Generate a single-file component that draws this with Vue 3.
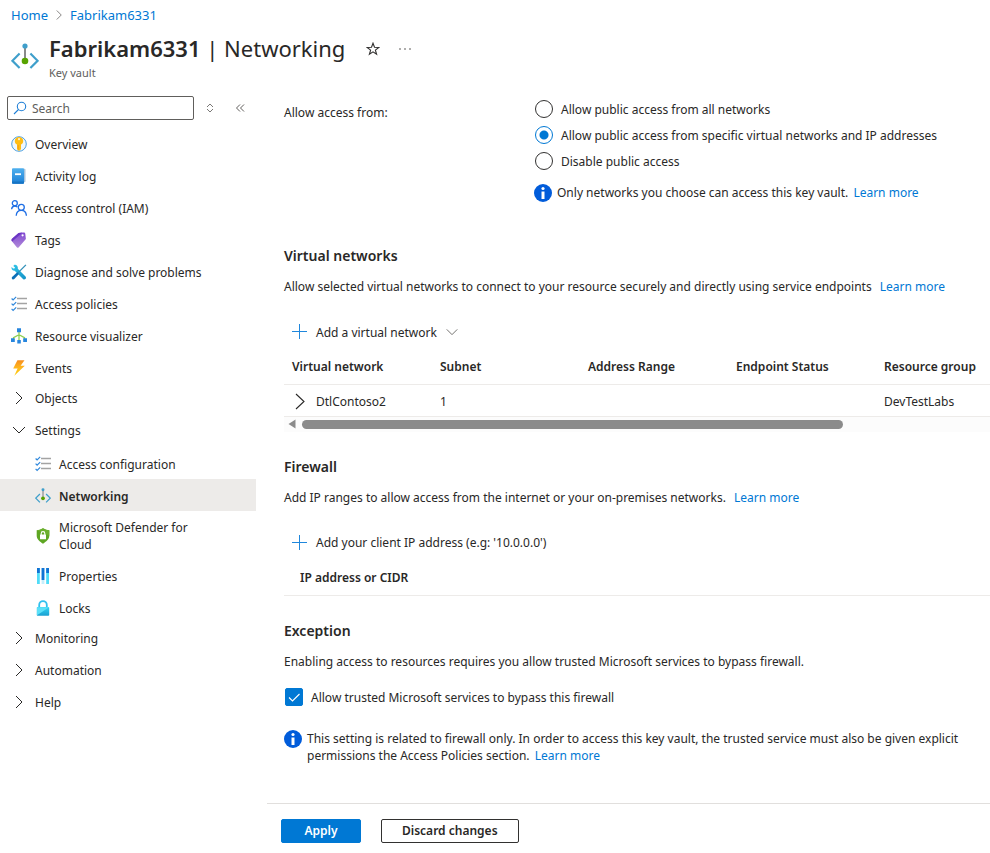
<script setup>
import { ref } from 'vue'

const search = ref('')
const access = ref('specific')
const bypass = ref(true)

const topItems = [
  { label: 'Overview', icon: 'key' },
  { label: 'Activity log', icon: 'log' },
  { label: 'Access control (IAM)', icon: 'people' },
  { label: 'Tags', icon: 'tag' },
  { label: 'Diagnose and solve problems', icon: 'tools' },
  { label: 'Access policies', icon: 'checklist' },
  { label: 'Resource visualizer', icon: 'tree' },
  { label: 'Events', icon: 'bolt' },
]

const groups = [
  { label: 'Objects', items: [] },
  {
    label: 'Settings',
    open: true,
    items: [
      { label: 'Access configuration', icon: 'checklist' },
      { label: 'Networking', icon: 'network', active: true },
      { label: 'Microsoft Defender for Cloud', icon: 'shield' },
      { label: 'Properties', icon: 'bars' },
      { label: 'Locks', icon: 'lock' },
    ],
  },
  { label: 'Monitoring', items: [] },
  { label: 'Automation', items: [] },
  { label: 'Help', items: [] },
]

const accessOptions = [
  { value: 'all', label: 'Allow public access from all networks' },
  { value: 'specific', label: 'Allow public access from specific virtual networks and IP addresses' },
  { value: 'none', label: 'Disable public access' },
]

const columns = ['Virtual network', 'Subnet', 'Address Range', 'Endpoint Status', 'Resource group']
const rows = [{ name: 'DtlContoso2', subnet: '1', range: '', status: '', group: 'DevTestLabs' }]
</script>

<template>
  <div class="page">
    <svg class="sprite" width="0" height="0" aria-hidden="true">
      <defs>
        <linearGradient id="g-blue" x1="0" y1="0" x2="0" y2="1">
          <stop offset="0" stop-color="#4fb0ee" /><stop offset="1" stop-color="#1b7fd6" />
        </linearGradient>
        <linearGradient id="g-purple" x1="0" y1="0" x2="0" y2="1">
          <stop offset="0" stop-color="#8148d2" /><stop offset="1" stop-color="#b08ad8" />
        </linearGradient>
        <linearGradient id="g-bolt" x1="0" y1="0" x2="0" y2="1">
          <stop offset="0" stop-color="#f78d1e" /><stop offset="0.5" stop-color="#ffb81c" /><stop offset="1" stop-color="#fdd00f" />
        </linearGradient>
        <linearGradient id="g-lock" x1="0" y1="0" x2="0" y2="1">
          <stop offset="0" stop-color="#32d4f5" /><stop offset="1" stop-color="#1a9fd0" />
        </linearGradient>
        <linearGradient id="g-tool" x1="0" y1="0" x2="1" y2="1">
          <stop offset="0" stop-color="#32c8ea" /><stop offset="1" stop-color="#1490c6" />
        </linearGradient>
      </defs>
      <symbol id="key" viewBox="0 0 16 16">
        <circle cx="8" cy="8" r="7.3" fill="#eef7fd" stroke="#4c9fdf" stroke-width="1" />
        <path d="M8 1.100c2.400 0 4.200 1.700 4.200 3.900 0 1.700-.8 2.900-2.200 3.600v4.600L8 15l-2-1.800V8.600C4.600 7.900 3.800 6.700 3.800 5c0-2.200 1.800-3.900 4.200-3.900z" fill="#ffbd14" />
        <circle cx="8" cy="3.200" r="1.100" fill="#fff3d0" />
        <path d="M7.300 9v4.800" stroke="#f39a12" stroke-width=".8" />
      </symbol>
      <symbol id="log" viewBox="0 0 16 16">
        <path d="M12 .7h1.500a1 1 0 0 1 1 1v11.600a1 1 0 0 1-1 1H12z" fill="#a8c4dc" />
        <rect x="1" y=".3" width="12" height="15.400" rx="1" fill="url(#g-blue)" />
        <path d="M1 13.500h12v1.200a1 1 0 0 1-1 1H2a1 1 0 0 1-1-1z" fill="#1674c4" />
        <rect x="4" y="5.300" width="6" height="1.800" fill="#fff" />
      </symbol>
      <symbol id="people" viewBox="0 0 16 16">
        <g fill="none" stroke="#1f6fe5" stroke-width="1.300">
          <circle cx="3.800" cy="3.200" r="2.500" /><circle cx="10.300" cy="7.300" r="3" />
          <path d="M.6 9.300C.8 7.300 2 6 3.800 6c1.200 0 2 .5 2.600 1.200M5.200 15.700c.2-3.300 2.200-5.300 5.100-5.300s4.900 2 5.100 5.300" />
        </g>
      </symbol>
      <symbol id="tag" viewBox="0 0 16 16">
        <path d="M1 6.800 7.600.9l5-.4c1 0 1.600.5 1.700 1.400l.6 5L7.600 15.400c-.5.5-1.100.5-1.600 0L.9 9.200c-.6-.8-.6-1.700.1-2.400z" fill="url(#g-purple)" />
        <path d="M1 6.800 7.600.9l3.900-.3L1.100 9.500c-.8-.9-.8-1.900-.1-2.700z" fill="#6b36c4" />
        <circle cx="11.600" cy="3.300" r="1.100" fill="#fff" />
      </symbol>
      <symbol id="tools" viewBox="0 0 16 16">
        <path d="M3.400.8 2.300 1.900 4 3.600l-.6 1-1.300-.2L.6 3C.1 5 1.300 6.700 3.700 6.700l8.300 8.200c1.600 1.500 4-.7 2.500-2.400L6.800 4.700C7.200 2.300 5.700.4 3.400.8z" fill="url(#g-tool)" />
        <path d="m14.900.9-8 8" stroke="#2f8fb8" stroke-width="1.300" />
        <path d="m6.200 8.200 1.800 1.800-4.700 5c-1.500 1.300-3.300-.6-2.200-2z" fill="#0c6fb8" />
      </symbol>
      <symbol id="checklist" viewBox="0 0 16 16">
        <path d="M6 2.500h10M6 7.500h10M6 12.500h10" stroke="#a3a3a3" stroke-width="1.600" />
        <path d="m.6 2.500 1.500 1.500L5.200.9M.6 7.700l1.500 1.500 3.100-3.100M.6 12.900l1.500 1.500 3.100-3.100" fill="none" stroke="#2f88dc" stroke-width="1.200" />
      </symbol>
      <symbol id="tree" viewBox="0 0 16 16">
        <path d="M8 4v8M2.500 12V9.700L8 6.800l5.500 2.900V12" fill="none" stroke="#8fcf52" stroke-width="1.300" />
        <path d="M6 .3h4v4H6zM6.300 12h3.500v3.600H6.300zM0 10.300h3.800v3.800H0zM12.200 10.300H16v3.800h-3.800z" fill="#2786de" />
      </symbol>
      <symbol id="bolt" viewBox="0 0 16 16">
        <path d="M6.400.3h7.100L9.600 5.700h4.200L3.300 15.700l3.300-7.200H2.200z" fill="url(#g-bolt)" />
      </symbol>
      <symbol id="network" viewBox="0 0 28 28">
        <path d="M8.600 10.500 1.400 17.800l7.200 7.300M19.400 10.500l7.200 7.300-7.200 7.300" fill="none" stroke="#3f9fcb" stroke-width="2.200" />
        <path d="M14 4v14" stroke="#8a8a8a" stroke-width="2" />
        <circle cx="14" cy="3" r="2.600" fill="#3f9fcb" /><circle cx="14" cy="18" r="3.300" fill="#57a300" />
      </symbol>
      <symbol id="shield" viewBox="0 0 16 16">
        <path d="M8 .3c2 1.300 4 1.800 6.300 1.900v5.600c0 3.600-3.200 6-6.300 7.900-3.100-1.900-6.300-4.300-6.300-7.900V2.200C4 2.100 6 1.600 8 .3z" fill="#5ea623" />
        <path d="M8 .3c2 1.300 4 1.800 6.300 1.900v5.600L1.700 2.200C4 2.100 6 1.600 8 .3z" fill="#6cb02e" />
        <rect x="5" y="6.600" width="6" height="4.600" rx=".5" fill="#fff" />
        <path d="M6.200 7V5.400a1.800 1.800 0 0 1 3.600 0V7" fill="none" stroke="#fff" stroke-width="1.100" />
      </symbol>
      <symbol id="bars" viewBox="0 0 16 16">
        <path d="M2 0h2.800v16H2zM11.200 0H14v16h-2.800z" fill="#50dcf8" />
        <path d="M6.600 0h2.800v16H6.600z" fill="#c6eefb" />
        <path d="M2 0h2.800v5H2zM6.600 0h2.800v12H6.600zM11.200 0H14v5h-2.800z" fill="#1173d4" />
      </symbol>
      <symbol id="lock" viewBox="0 0 16 16">
        <path d="M4.200 8V4.900a3.800 3.800 0 0 1 7.600 0V8" fill="none" stroke="#32c0ee" stroke-width="1.800" />
        <rect x="1.800" y="7" width="12.400" height="8.800" rx=".8" fill="url(#g-lock)" />
        <path d="M2 7.200v8L14 7.200z" fill="#5be0f8" />
      </symbol>
      <symbol id="right" viewBox="0 0 16 16">
        <path d="m5 2 6 6-6 6" fill="none" stroke="currentColor" stroke-width="1" />
      </symbol>
      <symbol id="right-large" viewBox="0 0 16 20">
        <path d="m4 3 8 7.500L4 18" fill="none" stroke="currentColor" stroke-width="1.100" />
      </symbol>
      <symbol id="down" viewBox="0 0 16 16">
        <path d="m2 5 6 6 6-6" fill="none" stroke="currentColor" stroke-width="1" />
      </symbol>
      <symbol id="plus" viewBox="0 0 16 16">
        <path d="M7.500 0v15M0 7.500h15" stroke="#1f87dc" stroke-width="1" />
      </symbol>
      <symbol id="info" viewBox="0 0 18 18">
        <circle cx="9" cy="9" r="9" fill="#015cda" />
        <circle cx="9" cy="4.500" r="1.600" fill="#fff" /><path d="M7.500 7.500h3v7.500h-3z" fill="#fff" />
      </symbol>
    </svg>

    <header class="head">
      <nav class="crumbs" aria-label="Breadcrumb">
        <a href="#">Home</a>
        <svg class="crumb-sep"><use href="#right" /></svg>
        <a href="#">Fabrikam6331</a>
      </nav>
      <div class="title-row">
        <svg class="title-icon"><use href="#network" /></svg>
        <div>
          <div class="title-line">
            <h1><b>Fabrikam6331</b> | Networking</h1>
            <button class="bare star" aria-label="Favorite">
              <svg viewBox="0 0 14 14" width="14" height="14"><path d="m7 1.200 1.500 4.100 4.300.1-3.400 2.700 1.200 4.200L7 9.900l-3.600 2.400 1.200-4.200L1.200 5.400l4.300-.1z" fill="none" stroke="#323130" stroke-width="1.100" /></svg>
            </button>
            <button class="bare more" aria-label="More">
              <svg viewBox="0 0 12 4" width="12" height="4"><path d="M0 1.500h2v1H0zM5 1.500h2v1H5zM10 1.500h2v1h-2z" fill="#605e5c" /></svg>
            </button>
          </div>
          <p class="subtitle">Key vault</p>
        </div>
      </div>
    </header>

    <div class="body">
      <aside class="side">
        <div class="search-row">
          <label class="search">
            <svg viewBox="0 0 14 14" width="14" height="14"><circle cx="8.500" cy="5.500" r="4.200" fill="none" stroke="#1f7fd6" stroke-width="1.100" /><path d="M5.500 8.500 1 13" stroke="#1f7fd6" stroke-width="1.100" /></svg>
            <input v-model="search" type="text" placeholder="Search" aria-label="Search" />
          </label>
          <button class="bare" aria-label="Expand all">
            <svg viewBox="0 0 10 10" width="10" height="10"><path d="M2 4 5 1l3 3M2 6l3 3 3-3" fill="none" stroke="#7a7876" /></svg>
          </button>
          <button class="bare" aria-label="Collapse menu">
            <svg viewBox="0 0 10 10" width="10" height="10"><path d="M5 1.500 1.500 5 5 8.500M9 1.500 5.500 5 9 8.500" fill="none" stroke="#605e5c" /></svg>
          </button>
        </div>
        <nav class="menu" aria-label="Resource menu">
          <a v-for="item in topItems" :key="item.label" href="#" class="item">
            <svg class="icon"><use :href="'#' + item.icon" /></svg>{{ item.label }}
          </a>
          <template v-for="group in groups" :key="group.label">
            <button class="group" :aria-expanded="!!group.open">
              <svg class="icon"><use :href="group.open ? '#down' : '#right'" /></svg>{{ group.label }}
            </button>
            <a v-for="item in group.items" :key="item.label" href="#" class="item sub" :class="{ active: item.active }">
              <svg class="icon"><use :href="'#' + item.icon" /></svg><span>{{ item.label }}</span>
            </a>
          </template>
        </nav>
      </aside>

      <main class="main">
        <div class="content">
          <section class="access">
            <div id="access-label" class="access-label">Allow access from:</div>
            <div class="access-options">
              <div role="radiogroup" aria-labelledby="access-label">
                <label v-for="option in accessOptions" :key="option.value" class="choice">
                  <input v-model="access" type="radio" name="access" :value="option.value" />{{ option.label }}
                </label>
              </div>
              <div class="note">
                <svg class="info"><use href="#info" /></svg>
                <p>Only networks you choose can access this key vault. <a href="#">Learn more</a></p>
              </div>
            </div>
          </section>

          <section>
            <h2>Virtual networks</h2>
            <p class="lead">Allow selected virtual networks to connect to your resource securely and directly using service endpoints <a href="#">Learn more</a></p>
            <button class="add">
              <svg class="icon"><use href="#plus" /></svg>Add a virtual network<svg class="caret"><use href="#down" /></svg>
            </button>
            <div class="table-wrap">
              <table class="networks">
                <thead>
                  <tr><th v-for="c in columns" :key="c" scope="col">{{ c }}</th></tr>
                </thead>
                <tbody>
                  <tr v-for="row in rows" :key="row.name">
                    <td>
                      <button class="expand"><svg class="chev"><use href="#right-large" /></svg>{{ row.name }}</button>
                    </td>
                    <td>{{ row.subnet }}</td>
                    <td>{{ row.range }}</td>
                    <td>{{ row.status }}</td>
                    <td>{{ row.group }}</td>
                  </tr>
                </tbody>
              </table>
            </div>
            <div class="scrollbar">
              <svg viewBox="0 0 8 10" width="8" height="10"><path d="M7.500.5v9L.5 5z" fill="#8b8b8b" /></svg>
              <div class="thumb"></div>
            </div>
          </section>

          <section>
            <h2>Firewall</h2>
            <p class="lead">Add IP ranges to allow access from the internet or your on-premises networks. <a href="#">Learn more</a></p>
            <button class="add">
              <svg class="icon"><use href="#plus" /></svg>Add your client IP address (e.g: '10.0.0.0')
            </button>
            <table class="addresses">
              <thead>
                <tr><th scope="col">IP address or CIDR</th></tr>
              </thead>
            </table>
          </section>

          <section>
            <h2>Exception</h2>
            <p class="lead">Enabling access to resources requires you allow trusted Microsoft services to bypass firewall.</p>
            <label class="choice check">
              <span class="box">
                <input v-model="bypass" type="checkbox" />
                <svg v-if="bypass" viewBox="0 0 18 18"><path d="m4 9.500 3.500 3.500L14.500 6" fill="none" stroke="#fff" stroke-width="1.100" /></svg>
              </span>Allow trusted Microsoft services to bypass this firewall
            </label>
            <div class="note wide">
              <svg class="info"><use href="#info" /></svg>
              <p>This setting is related to firewall only. In order to access this key vault, the trusted service must also be given explicit permissions the Access Policies section. <a href="#">Learn more</a></p>
            </div>
          </section>
        </div>

        <footer class="footer">
          <button class="btn primary">Apply</button>
          <button class="btn">Discard changes</button>
        </footer>
      </main>
    </div>
  </div>
</template>

<style>
body {
  margin: 0;
  background: #fff;
}
</style>

<style scoped>
.page {
  display: flex;
  flex-direction: column;
  min-height: 100vh;
  font-family: "Noto Sans", "Open Sans", sans-serif;
  font-size: 12px;
  line-height: 17px;
  color: #292827;
}
*, *::before, *::after { box-sizing: border-box; }
.sprite { position: absolute; }
h1, h2, p { margin: 0; }
a { color: #0078d4; text-decoration: none; }
button, input { font: inherit; color: inherit; }
button { padding: 0; border: 0; background: none; cursor: pointer; }
svg { flex: none; display: block; }
.icon { width: 16px; height: 16px; }

.crumbs { display: flex; align-items: center; height: 30px; padding-left: 11px; gap: 5px; font-size: 13px; }
.crumb-sep { width: 12px; height: 12px; color: #605e5c; }
.title-row { display: flex; gap: 10px; padding: 2px 0 0 11px; height: 60px; }
.title-icon { width: 28px; height: 28px; margin-top: 11px; }
.title-line { display: flex; align-items: center; height: 34px; }
h1 { font-size: 22px; line-height: 32px; padding-bottom: 2px; font-weight: 400; }
h1 b { font-weight: 600; }
.star { margin-left: 21px; }
.more { margin-left: 19px; }
.subtitle { font-size: 11px; line-height: 14px; color: #605e5c; }

.body { display: flex; flex: 1; }
.side { width: 256px; flex: none; padding-top: 6px; }
.search-row { display: flex; align-items: center; gap: 10px; padding-left: 7px; height: 24px; }
.search-row .bare { width: 20px; display: flex; justify-content: center; }
.search {
  display: flex; align-items: center; gap: 5px;
  width: 187px; height: 24px; padding: 0 5px;
  border: 1px solid #605e5c; border-radius: 2px;
}
.search input { flex: 1; min-width: 0; border: 0; outline: 0; padding: 0; background: none; }
.search input::placeholder { color: #605e5c; opacity: 1; }
.search-row .bare:first-of-type { margin-left: -4px; }
.menu { display: flex; flex-direction: column; padding-top: 7px; }
.item, .group {
  display: flex; align-items: center; gap: 8px;
  min-height: 32px; padding: 2px 56px 0 11px;
  color: inherit; text-align: left;
}
.item { white-space: nowrap; }
.group { min-height: 30px; margin-bottom: 2px; padding-top: 0; }
.sub { padding: 8px 56px 6px 35px; white-space: normal; }
.active { background: #edebe9; font-weight: 600; }

.main { flex: 1; min-width: 0; display: flex; flex-direction: column; }
.content { padding-left: 28px; }
.access { display: flex; padding-top: 6px; margin-bottom: 45px; }
.access-label { width: 250px; flex: none; padding-top: 8px; }
.choice { display: flex; align-items: center; gap: 8px; height: 26px; padding-left: 1px; }
.choice input {
  appearance: none; flex: none; width: 18px; height: 18px; margin: 0;
  border: 1px solid #323130; border-radius: 50%; background: #fff;
}
.choice input[type="radio"]:checked {
  border-color: #0078d4;
  background: radial-gradient(circle, #0078d4 4px, #fff 5px);
}
.note { display: flex; gap: 5px; padding-top: 10px; }
.info { width: 18px; height: 18px; }
.note a { margin-left: 2px; }

h2 { font-size: 14px; line-height: 18px; font-weight: 600; }
.lead { margin-top: 13px; }
.lead a { margin-left: 5px; }
.add { display: flex; align-items: center; gap: 8px; height: 24px; margin: 25px 0 0 8px; }
.caret { width: 14px; height: 14px; color: #605e5c; }
.table-wrap { overflow: hidden; }
table { border-collapse: collapse; }
th, td { text-align: left; font-weight: 400; }
th { font-weight: 600; }
.networks { table-layout: fixed; width: 100%; margin-top: 4px; }
.networks th { width: 148px; height: 36px; padding: 2px 0 0 8px; white-space: nowrap; border-bottom: 1px solid #edebe9; }
.networks th:last-child { width: auto; }
.networks td { height: 32px; padding: 2px 0 0 8px; border-bottom: 1px solid #edebe9; }
.expand { display: flex; align-items: center; gap: 8px; }
.chev { width: 16px; height: 20px; }
.scrollbar { display: flex; align-items: center; height: 15px; padding-left: 4px; gap: 6px; background: #fcfcfc; margin-bottom: 26px; }
.thumb { width: 77%; height: 9px; border-radius: 5px; background: #8b8b8b; }
.addresses { width: 100%; margin: 1px 0 26px; }
.addresses th { height: 40px; padding: 4px 16px 0; border-bottom: 1px solid #edebe9; }

.check { height: 18px; margin-top: 18px; }
.box { display: grid; width: 18px; height: 18px; }
.box > * { grid-area: 1 / 1; }
.check input { border-radius: 2px; }
.check input:checked { background: #0078d4; border-color: #0078d4; }
.box svg { pointer-events: none; z-index: 1; }
.wide { padding: 24px 16px 24px 0; }

.footer {
  display: flex; gap: 20px;
  margin: auto 0 0 11px; padding: 15px 14px 10px;
  border-top: 1px solid #e1dfdd;
}
.btn { height: 24px; padding: 0 20px 1px; line-height: 20px; border: 1px solid #323130; border-radius: 2px; font-weight: 600; }
.primary { min-width: 80px; background: #0078d4; border-color: #0078d4; color: #fff; }
</style>
